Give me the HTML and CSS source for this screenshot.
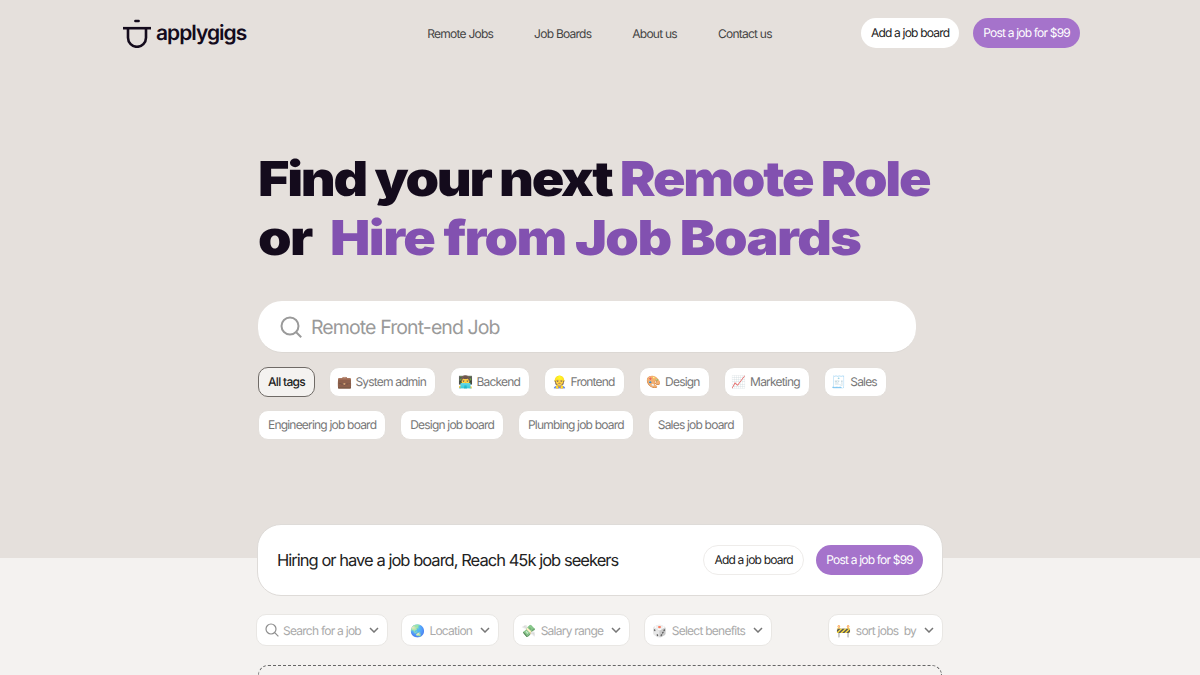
FILE: index.html
```html
<!DOCTYPE html>
<html lang="en">
<head>
    <meta charset="UTF-8">
    <meta name="viewport" content="width=device-width, initial-scale=1.0">
    <title>Applygigs</title>
    <link rel="stylesheet" href="styles.css">
</head>
<body>
    <section class="hero">
        <header class="topbar">
            <a class="logo" href="#">
                <svg class="logo-mark" width="28" height="30" viewBox="0 0 28 30" fill="none" stroke="#140b1c" stroke-width="2.6">
                    <path d="M0 10.2h28"/>
                    <path d="M5 10.2v9.6a9 9 0 0 0 18 0v-9.6"/>
                    <path d="M12.4 3h3.2" stroke-linecap="round"/>
                </svg>
                <span>applygigs</span>
            </a>
            <nav class="nav">
                <a href="#">Remote Jobs</a>
                <a href="#">Job Boards</a>
                <a href="#">About us</a>
                <a href="#">Contact us</a>
            </nav>
            <div class="actions">
                <a class="btn btn-white" href="#">Add a job board</a>
                <a class="btn btn-purple" href="#">Post a job for $99</a>
            </div>
        </header>

        <div class="hero-inner">
            <h1>
                <span class="line">Find your next <em>Remote Role</em></span>
                <span class="line line-two">or &nbsp;<em>Hire from Job Boards</em></span>
            </h1>

            <label class="search">
                <svg width="24" height="24" viewBox="0 0 24 24" fill="none" stroke="#9a9a9a" stroke-width="2">
                    <circle cx="11" cy="11" r="8.5"/>
                    <path d="M17.2 17.2l5 5"/>
                </svg>
                <span>Remote Front-end Job</span>
            </label>

            <div class="tags">
                <a class="tag tag-active" href="#">All tags</a>
                <a class="tag" href="#"><i>💼</i>System admin</a>
                <a class="tag" href="#"><i>👨‍💻</i>Backend</a>
                <a class="tag" href="#"><i>👷</i>Frontend</a>
                <a class="tag" href="#"><i>🎨</i>Design</a>
                <a class="tag" href="#"><i>📈</i>Marketing</a>
                <a class="tag" href="#"><i>🧾</i>Sales</a>
            </div>
            <div class="tags">
                <a class="tag" href="#">Engineering job board</a>
                <a class="tag" href="#">Design job board</a>
                <a class="tag" href="#">Plumbing job board</a>
                <a class="tag" href="#">Sales job board</a>
            </div>
        </div>
    </section>

    <section class="lower">
        <div class="banner">
            <p>Hiring or have a job board, Reach 45k job seekers</p>
            <div class="banner-actions">
                <a class="btn btn-outline" href="#">Add a job board</a>
                <a class="btn btn-purple" href="#">Post a job for $99</a>
            </div>
        </div>

        <div class="filters">
            <div class="filter">
                <svg width="14" height="14" viewBox="0 0 14 14" fill="none" stroke="#8e8e8e" stroke-width="1.2">
                    <circle cx="6" cy="6" r="5"/>
                    <path d="M9.7 9.7l3.7 3.7"/>
                </svg>
                <span>Search for a job</span>
                <svg class="chev" width="10" height="6" viewBox="0 0 10 6" fill="none" stroke="#777" stroke-width="1.5"><path d="M1 1l4 4 4-4"/></svg>
            </div>
            <div class="filter">
                <i>🌏</i><span>Location</span>
                <svg class="chev" width="10" height="6" viewBox="0 0 10 6" fill="none" stroke="#777" stroke-width="1.5"><path d="M1 1l4 4 4-4"/></svg>
            </div>
            <div class="filter">
                <i>💸</i><span>Salary range</span>
                <svg class="chev" width="10" height="6" viewBox="0 0 10 6" fill="none" stroke="#777" stroke-width="1.5"><path d="M1 1l4 4 4-4"/></svg>
            </div>
            <div class="filter">
                <i>🎲</i><span>Select benefits</span>
                <svg class="chev" width="10" height="6" viewBox="0 0 10 6" fill="none" stroke="#777" stroke-width="1.5"><path d="M1 1l4 4 4-4"/></svg>
            </div>
            <div class="filter filter-sort">
                <i>🚧</i><span>sort jobs &nbsp;by</span>
                <svg class="chev" width="10" height="6" viewBox="0 0 10 6" fill="none" stroke="#777" stroke-width="1.5"><path d="M1 1l4 4 4-4"/></svg>
            </div>
        </div>

        <div class="listing"></div>
    </section>
</body>
</html>
```

FILE: styles.css
```css
* {
    box-sizing: border-box;
}
html, body {
    height: 675px;
    overflow: hidden;
}
body {
    margin: 0;
    font-family: Inter, "Liberation Sans", sans-serif;
    text-rendering: geometricPrecision;
    background: #f4f2f0;
    color: #222;
}
a {
    color: inherit;
    text-decoration: none;
}
i {
    font-style: normal;
}

.hero {
    height: 558px;
    background: #e5e0dc;
}
.topbar {
    display: grid;
    grid-template-columns: 1fr auto 1fr;
    align-items: center;
    padding: 18px 120px 0 123px;
}
.logo {
    display: flex;
    align-items: center;
    gap: 5px;
    font-size: 21px;
    font-weight: 600;
    letter-spacing: -1px;
    color: #140b1c;
}
.nav {
    display: flex;
    gap: 41px;
    margin-right: 4px;
    font-size: 12px;
    letter-spacing: -0.75px;
    color: #444;
}
.actions {
    display: flex;
    justify-content: flex-end;
    gap: 14px;
}
.btn {
    display: inline-flex;
    align-items: center;
    height: 30px;
    padding: 0 10px 1px;
    border-radius: 15px;
    font-size: 12px;
    letter-spacing: -0.8px;
    white-space: nowrap;
}
.btn-white {
    background: #fff;
    color: #222;
}
.btn-purple {
    background: #a573cb;
    color: #fff;
}
.btn-outline {
    background: #fff;
    border: 1px solid #eeecea;
    color: #222;
}

.hero-inner {
    padding: 0 0 0 258px;
    margin-top: 101px;
}
h1 {
    width: 700px;
    margin: 0 0 34px;
    font-size: 48px;
    line-height: 59px;
    font-weight: 900;
    color: #140b1c;
    letter-spacing: -2px;
    transform: scaleX(1.12);
    transform-origin: left;
}
.line {
    display: block;
    white-space: nowrap;
}
.line-two {
    letter-spacing: -1.4px;
}
h1 em {
    font-style: normal;
    color: #8251b0;
}
.search {
    display: flex;
    align-items: center;
    gap: 8px;
    width: 658px;
    height: 52px;
    padding: 0 21px;
    background: #fff;
    border-radius: 24px;
    border-bottom: 1px solid #dcd8d4;
    font-size: 19.5px;
    letter-spacing: -0.9px;
    color: #9a9a9a;
}
.tags {
    display: flex;
    gap: 14px;
    margin-top: 14px;
}
.tags + .tags {
    margin-top: 13px;
}
.tag {
    display: inline-flex;
    align-items: center;
    gap: 3.5px;
    height: 30px;
    padding: 0 9px 1px;
    background: #fff;
    border-radius: 10px;
    border: 1px solid #e3dfdb;
    font-size: 12px;
    letter-spacing: -0.8px;
    color: #777;
    white-space: nowrap;
}
.tag i {
    font-size: 12px;
    margin-left: -2px;
    letter-spacing: 0;
    opacity: 0.85;
}
.tag-active {
    background: #f4f2f0;
    border-color: #6f6a66;
    font-weight: 500;
    letter-spacing: -0.7px;
    color: #222;
}

.lower {
    padding: 0 257px;
}
.banner {
    display: flex;
    align-items: center;
    justify-content: space-between;
    height: 72px;
    margin-top: -34px;
    padding: 0 19px;
    background: #fff;
    border: 1px solid #dedbd8;
    border-radius: 24px;
    position: relative;
}
.banner p {
    margin: 0;
    font-size: 16.5px;
    letter-spacing: -0.97px;
    color: #222;
}
.banner-actions {
    display: flex;
    gap: 12.5px;
}
.filters {
    display: flex;
    gap: 13.5px;
    margin: 18px 0 0 -1px;
}
.filter {
    display: flex;
    align-items: center;
    gap: 4px;
    height: 32px;
    padding: 0 8px;
    background: #fff;
    border: 1px solid #e9e7e4;
    border-radius: 10px;
    font-size: 12px;
    letter-spacing: -0.75px;
    color: #aaa;
    white-space: nowrap;
}
.filter i {
    font-size: 12px;
    letter-spacing: 0;
    opacity: 0.75;
}
.filter .chev {
    margin-left: 4px;
}
.filter-sort {
    margin-left: auto;
}
.listing {
    height: 10px;
    margin: 19px 1px 0;
    border: 1px dashed #666;
    border-bottom: none;
    border-radius: 20px 20px 0 0;
}
```
